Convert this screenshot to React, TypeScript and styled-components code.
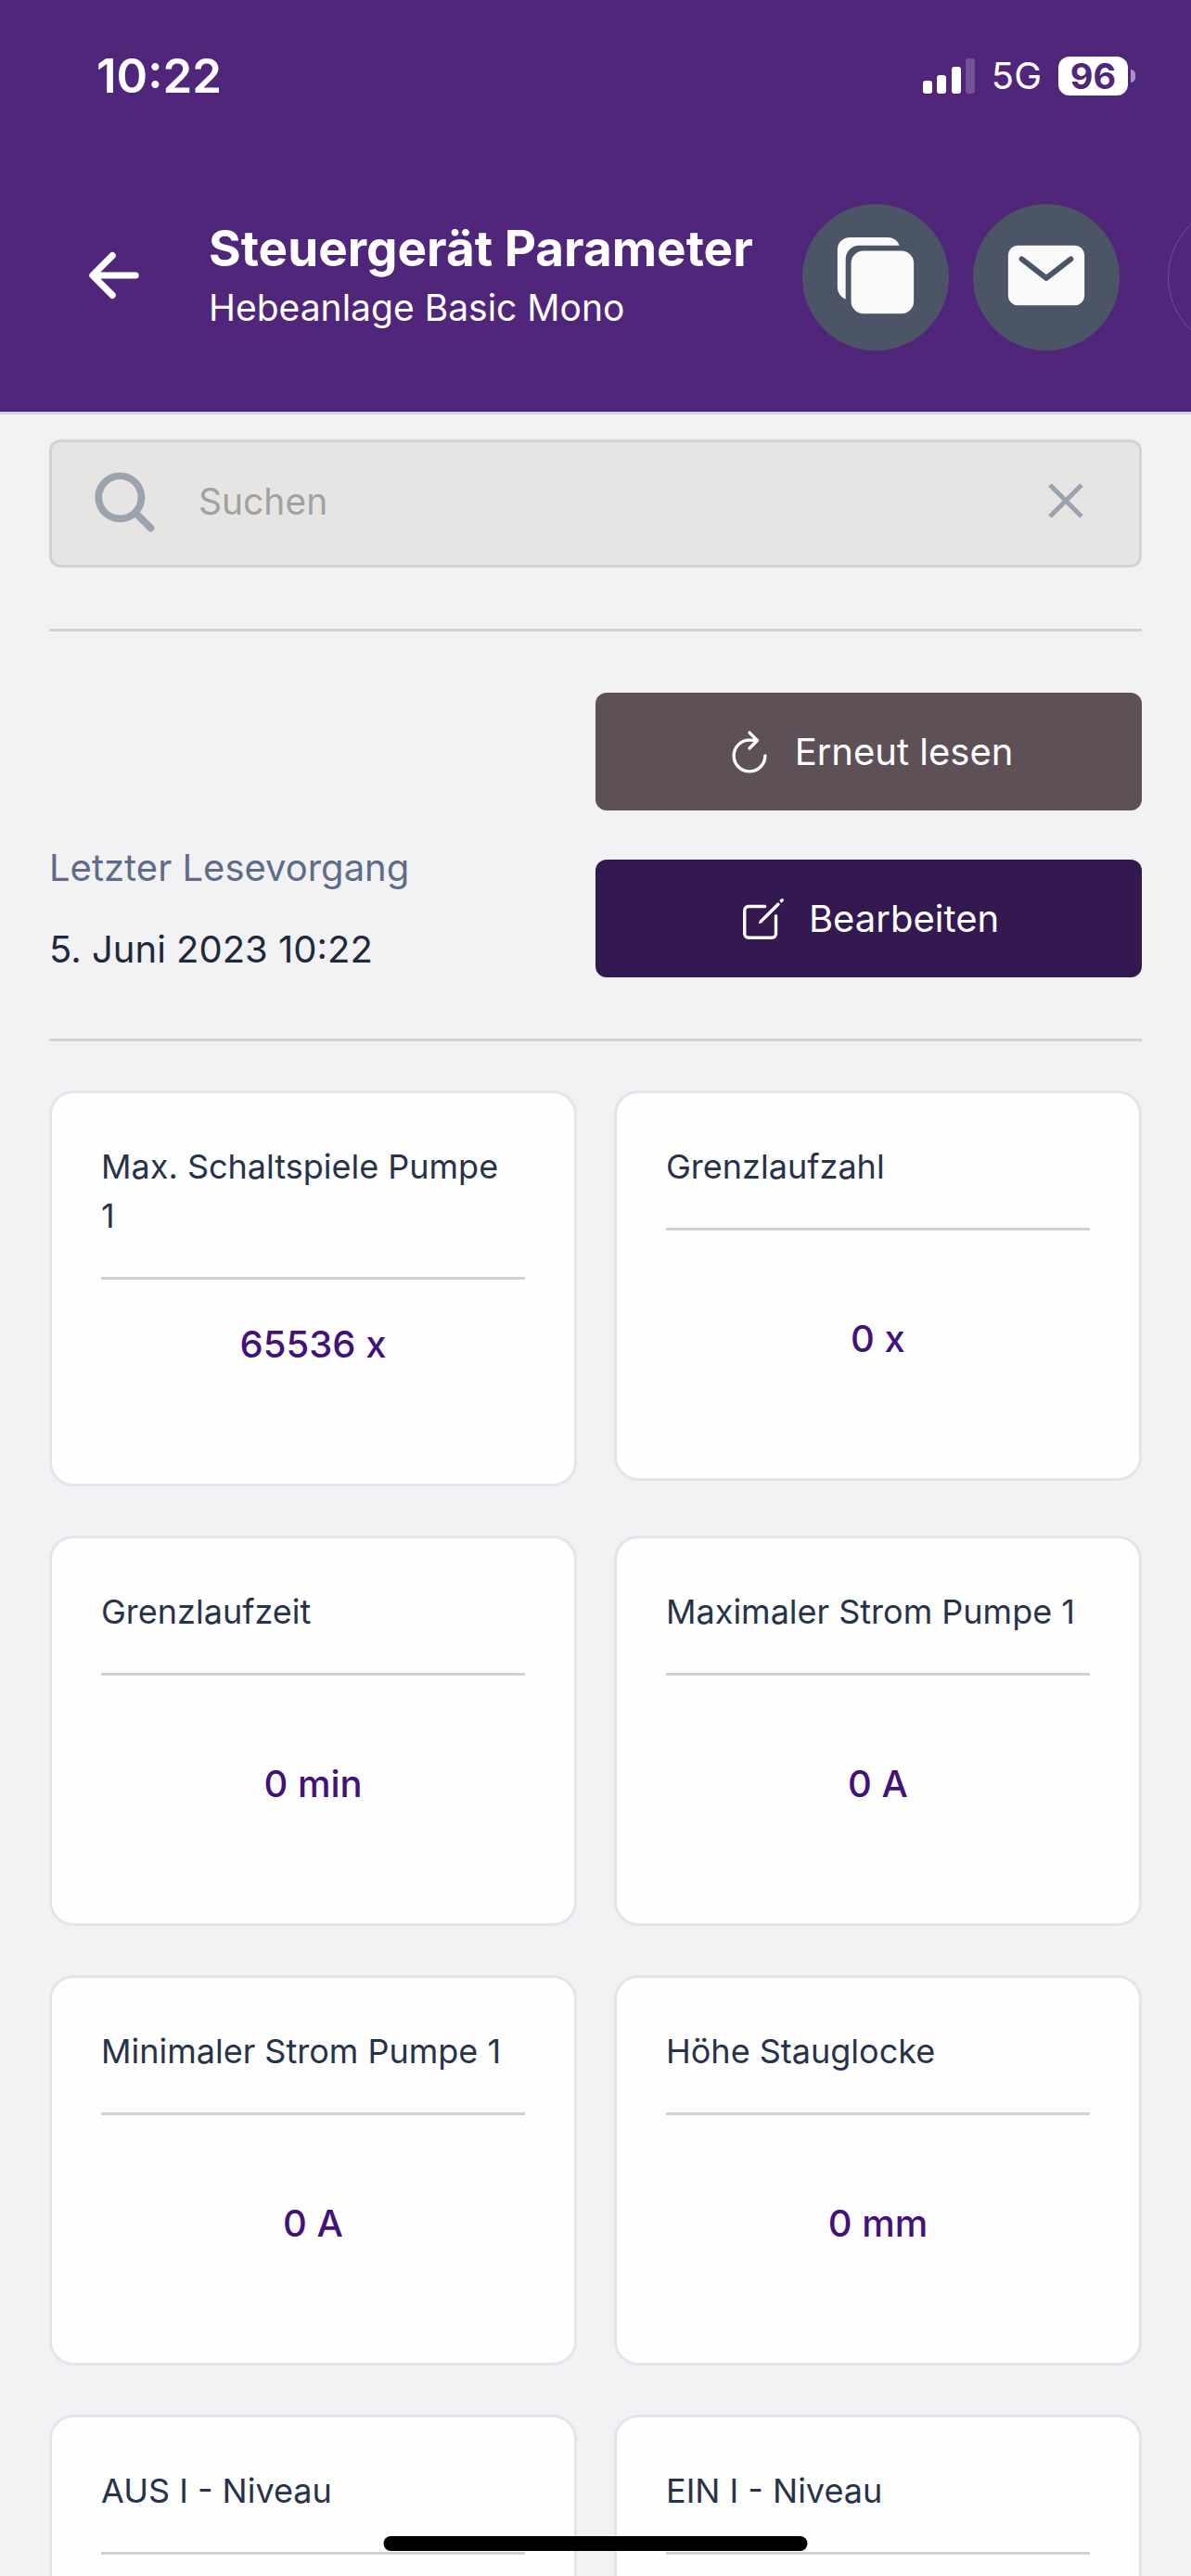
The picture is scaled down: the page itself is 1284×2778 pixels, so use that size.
import React, { useState } from "react";
import styled, { createGlobalStyle } from "styled-components";
import {
  IoArrowBack,
  IoCopy,
  IoCreateOutline,
  IoMail,
  IoRefreshOutline,
  IoSearch,
} from "react-icons/io5";

const color = {
  brand: "#50267a",
  brandDark: "#341850",
  slate: "#4c5566",
  taupe: "#5d5057",
  page: "#f2f2f5",
  card: "#fefefe",
  cardEdge: "#e4e4ea",
  field: "#e6e5e3",
  line: "#d2d2d2",
  icon: "#9ca3af",
  placeholder: "#a1a1a1",
  muted: "#5f6c87",
  ink: "#1e293b",
  inkSoft: "#27334a",
  value: "#42127a",
};

const GlobalStyle = createGlobalStyle`
  *, *::before, *::after { box-sizing: border-box; }
  body {
    margin: 0;
    background: ${color.page};
    font-family: Inter, "Liberation Sans", sans-serif;
  }
  button, input { font: inherit; color: inherit; }
  button { border: 0; padding: 0; background: none; cursor: pointer; }
`;

const Screen = styled.div`
  display: flex;
  flex-direction: column;
  height: 100vh;
  overflow: hidden;
`;

const Header = styled.header`
  flex: none;
  background: ${color.brand};
  border-bottom: 3px solid #d3d3df;
  color: #fff;
`;

const StatusBar = styled.div`
  display: flex;
  align-items: center;
  justify-content: space-between;
  padding: 48px 60px 0 104px;
  height: 116px;
`;

const Clock = styled.span`
  font-size: 51px;
  font-weight: 600;
  line-height: 68px;
`;

const StatusIcons = styled.div`
  display: flex;
  align-items: center;
  gap: 18px;
`;

const Network = styled.span`
  font-size: 40px;
  font-weight: 400;
  line-height: 68px;
`;

const Battery = styled.div`
  display: flex;
  align-items: center;
  gap: 3px;
`;

const BatteryLevel = styled.span`
  width: 75px;
  border-radius: 12px;
  background: #fff;
  color: ${color.brand};
  font-size: 38px;
  font-weight: 700;
  line-height: 42px;
  text-align: center;
`;

const BatteryTip = styled.span`
  width: 5px;
  height: 14px;
  border-radius: 0 8px 8px 0;
  background: #a894bd;
`;

const TitleBar = styled.div`
  display: flex;
  align-items: center;
  height: 328px;
  padding: 38px 0 0 85px;
`;

const BackButton = styled.button`
  display: flex;
  width: 76px;
  margin-right: 64px;
  padding-bottom: 4px;
`;

const Titles = styled.div`
  flex: 1;
  min-width: 0;
  padding-bottom: 4px;
  white-space: nowrap;
`;

const Title = styled.h1`
  margin: 0 0 2px;
  font-size: 53px;
  font-weight: 700;
  line-height: 68px;
`;

const Subtitle = styled.p`
  margin: 0;
  font-size: 39px;
  line-height: 56px;
`;

const Actions = styled.div`
  display: flex;
  flex: none;
  gap: 26px;
  width: 419px;
  overflow: hidden;
`;

const ActionButton = styled.button`
  display: flex;
  flex: none;
  align-items: center;
  justify-content: center;
  width: 158px;
  height: 158px;
  padding-bottom: 4px;
  border-radius: 50%;
  background: ${color.slate};
  color: #fafafa;
`;

const GhostButton = styled(ActionButton)`
  margin-left: 26px;
  border: 1px solid #6e4c92;
  background: none;
`;

const Content = styled.main`
  flex: 1;
  padding: 27px 53px 0;
  overflow: hidden;
`;

const SearchField = styled.label`
  display: flex;
  align-items: center;
  height: 138px;
  padding: 0 40px 4px 39px;
  border: 3px solid ${color.line};
  border-radius: 12px;
  background: ${color.field};
  color: ${color.icon};
`;

const SearchInput = styled.input`
  flex: 1;
  min-width: 0;
  margin: 0 40px;
  padding: 0;
  border: 0;
  outline: 0;
  background: none;
  color: ${color.ink};
  font-size: 39px;
  line-height: 56px;

  &::placeholder {
    color: ${color.placeholder};
    opacity: 1;
  }
`;

const ClearButton = styled.button`
  display: flex;
`;

const Rule = styled.hr`
  height: 3px;
  margin: 66px 0;
  border: 0;
  background: ${color.line};
`;

const Toolbar = styled.section`
  display: grid;
  grid-template-columns: 1fr 1fr;
  align-items: end;
`;

const LastRead = styled.div`
  padding-bottom: 2px;
  color: ${color.muted};
  font-size: 40px;
  line-height: 56px;
`;

const LastReadLabel = styled.p`
  margin: 0 0 32px;
`;

const LastReadTime = styled.time`
  display: block;
  color: ${color.ink};
`;

const ToolbarButtons = styled.div`
  display: grid;
  gap: 53px;
`;

const ToolbarButton = styled.button<{ $tone: string }>`
  display: flex;
  align-items: center;
  justify-content: center;
  gap: 22px;
  height: 127px;
  border-radius: 12px;
  background: ${(p) => p.$tone};
  color: #fff;
  font-size: 40px;
  line-height: 56px;
`;

const CardGrid = styled.section`
  display: grid;
  grid-template-columns: 1fr 1fr;
  align-items: start;
  gap: 53px 40px;
  margin-top: -13px;
`;

const Card = styled.article`
  display: flex;
  flex-direction: column;
  min-height: 421px;
  padding: 53px;
  border: 3px solid ${color.cardEdge};
  border-radius: 26px;
  background: ${color.card};
`;

const CardTitle = styled.h2`
  margin: 0;
  padding: 0 8px 39px 0;
  border-bottom: 3px solid ${color.line};
  color: ${color.inkSoft};
  font-size: 36px;
  font-weight: 400;
  line-height: 53px;
`;

const CardValue = styled.p`
  margin: auto 0 0;
  padding: 40px 0 67px;
  color: ${color.value};
  font-size: 40px;
  font-weight: 500;
  line-height: 60px;
  text-align: center;
`;

const HomeIndicator = styled.div`
  position: fixed;
  bottom: 27px;
  left: 50%;
  width: 457px;
  height: 16px;
  border-radius: 8px;
  background: #000;
  transform: translateX(-50%);
`;

const SignalIcon = () => (
  <svg width="56" height="38" viewBox="0 0 56 38" fill="#fff" aria-hidden="true">
    <rect x="0" y="24" width="10" height="14" rx="3" />
    <rect x="15" y="18" width="10" height="20" rx="3" />
    <rect x="31" y="9" width="10" height="29" rx="3" />
    <rect x="46" y="0" width="10" height="38" rx="3" opacity="0.2" />
  </svg>
);

const ClearIcon = () => (
  <svg width="78" height="78" viewBox="0 0 78 78" fill="none" stroke="currentColor" strokeWidth="5" aria-hidden="true">
    <path d="M22 21 56 55M56 21 22 55" />
  </svg>
);

type Parameter = { name: string; value?: string };

const parameters: Parameter[] = [
  { name: "Max. Schaltspiele Pumpe 1", value: "65536 x" },
  { name: "Grenzlaufzahl", value: "0 x" },
  { name: "Grenzlaufzeit", value: "0 min" },
  { name: "Maximaler Strom Pumpe 1", value: "0 A" },
  { name: "Minimaler Strom Pumpe 1", value: "0 A" },
  { name: "Höhe Stauglocke", value: "0 mm" },
  { name: "AUS I - Niveau" },
  { name: "EIN I - Niveau" },
];

export default function App() {
  const [query, setQuery] = useState("");
  const visible = parameters.filter((p) =>
    p.name.toLowerCase().includes(query.toLowerCase())
  );

  return (
    <Screen>
      <GlobalStyle />
      <Header>
        <StatusBar>
          <Clock>10:22</Clock>
          <StatusIcons>
            <SignalIcon />
            <Network>5G</Network>
            <Battery>
              <BatteryLevel>96</BatteryLevel>
              <BatteryTip />
            </Battery>
          </StatusIcons>
        </StatusBar>
        <TitleBar>
          <BackButton type="button" aria-label="Zurück">
            <IoArrowBack size={76} />
          </BackButton>
          <Titles>
            <Title>Steuergerät Parameter</Title>
            <Subtitle>Hebeanlage Basic Mono</Subtitle>
          </Titles>
          <Actions>
            <ActionButton type="button" aria-label="Kopieren">
              <IoCopy size={94} />
            </ActionButton>
            <ActionButton type="button" aria-label="E-Mail">
              <IoMail size={94} />
            </ActionButton>
            <GhostButton type="button" aria-label="Mehr" />
          </Actions>
        </TitleBar>
      </Header>

      <Content>
        <SearchField>
          <IoSearch size={79} />
          <SearchInput
            type="text"
            aria-label="Suchen"
            placeholder="Suchen"
            value={query}
            onChange={(e) => setQuery(e.target.value)}
          />
          <ClearButton type="button" aria-label="Löschen" onClick={() => setQuery("")}>
            <ClearIcon />
          </ClearButton>
        </SearchField>
        <Rule />
        <Toolbar>
          <LastRead>
            <LastReadLabel>Letzter Lesevorgang</LastReadLabel>
            <LastReadTime dateTime="2023-06-05T10:22">5. Juni 2023 10:22</LastReadTime>
          </LastRead>
          <ToolbarButtons>
            <ToolbarButton type="button" $tone={color.taupe}>
              <IoRefreshOutline size={54} />
              Erneut lesen
            </ToolbarButton>
            <ToolbarButton type="button" $tone={color.brandDark}>
              <IoCreateOutline size={54} />
              Bearbeiten
            </ToolbarButton>
          </ToolbarButtons>
        </Toolbar>
        <Rule />
        <CardGrid>
          {visible.map((p) => (
            <Card key={p.name}>
              <CardTitle>{p.name}</CardTitle>
              {p.value && <CardValue>{p.value}</CardValue>}
            </Card>
          ))}
        </CardGrid>
      </Content>
      <HomeIndicator />
    </Screen>
  );
}
